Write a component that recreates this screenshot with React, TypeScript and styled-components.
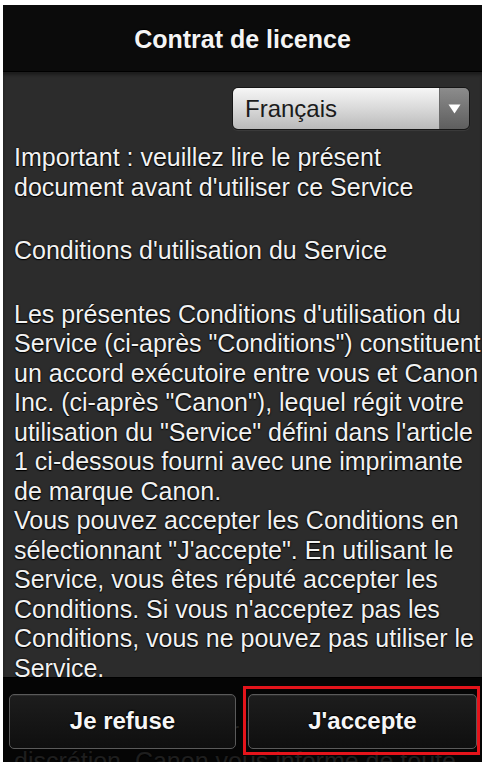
import React from 'react'
import styled, { createGlobalStyle } from 'styled-components'

const GlobalStyle = createGlobalStyle`
  html, body {
    margin: 0;
    padding: 0;
    background: #ffffff;
  }
  * {
    box-sizing: border-box;
  }
`

const paragraphs: string[][] = [
  ['Important : veuillez lire le présent', "document avant d'utiliser ce Service"],
  ["Conditions d'utilisation du Service"],
  [
    "Les présentes Conditions d'utilisation du",
    'Service (ci-après "Conditions") constituent',
    'un accord exécutoire entre vous et Canon',
    'Inc. (ci-après "Canon"), lequel régit votre',
    'utilisation du "Service" défini dans l\'article',
    '1 ci-dessous fourni avec une imprimante',
    'de marque Canon.',
    'Vous pouvez accepter les Conditions en',
    'sélectionnant "J\'accepte". En utilisant le',
    'Service, vous êtes réputé accepter les',
    "Conditions. Si vous n'acceptez pas les",
    'Conditions, vous ne pouvez pas utiliser le',
    'Service.',
  ],
  [
    'Canon peut modifier les Conditions à sa',
    'discrétion. Canon vous informe de toute',
    'modification apportée aux Conditions.',
  ],
]

const Screen = styled.div`
  position: relative;
  margin: 5px 3px 0 3px;
  height: 757px;
  display: flex;
  flex-direction: column;
  overflow: hidden;
  font-family: 'Liberation Sans', Arial, Helvetica, sans-serif;
`

const Header = styled.header`
  height: 67px;
  flex: none;
  display: flex;
  align-items: center;
  justify-content: center;
  background: #0b0b0b;
  border-bottom: 1px solid #000;
`

const Title = styled.h1`
  margin: 2px 0 0 0;
  font-size: 25px;
  font-weight: 700;
  color: #f4f4f4;
  text-shadow: 0 -1px 1px #000;
`

const Body = styled.main`
  flex: 1;
  background: #2c2c2c;
  box-shadow: inset 0 3px 3px rgba(0, 0, 0, 0.35);
  padding: 15px 12px 0 11px;
`

const LangRow = styled.div`
  display: flex;
  justify-content: flex-end;
`

const Select = styled.div`
  width: 238px;
  height: 43px;
  display: flex;
  border-radius: 6px;
  overflow: hidden;
  border: 1px solid #161616;
  box-shadow: 0 1px 1px rgba(255, 255, 255, 0.08);
`

const SelectValue = styled.div`
  flex: 1;
  display: flex;
  align-items: center;
  padding-left: 12px;
  font-size: 24px;
  color: #1b1b1b;
  background: linear-gradient(#f6f6f6 0%, #dcdcdc 45%, #bababa 100%);
`

const SelectArrow = styled.div`
  width: 30px;
  display: flex;
  align-items: center;
  justify-content: center;
  background: linear-gradient(#8c8c8c, #5e5e5e);
  border-left: 1px solid #6a6a6a;
`

const Text = styled.div`
  margin-top: 13px;
  color: #f2f2f2;
  font-size: 25px;
  line-height: 29.5px;
  text-shadow: 0 0 2px #000, 0 1px 1px #000;
`

const Paragraph = styled.p`
  margin: 0 0 34px 0;
`

const Line = styled.span`
  display: block;
  white-space: nowrap;
`

const Footer = styled.footer`
  position: absolute;
  left: 0;
  right: 0;
  bottom: 0;
  height: 85px;
  display: flex;
  align-items: center;
  gap: 7px;
  padding: 0 2px 0 6px;
  background: rgba(0, 0, 0, 0.88);
  border-top: 1px solid rgba(0, 0, 0, 0.9);
`

const Button = styled.button<{ $wide?: boolean }>`
  width: ${(p) => (p.$wide ? '100%' : '227px')};
  height: 55px;
  margin-top: ${(p) => (p.$wide ? '0' : '2px')};
  border: 1px solid #5a5a5a;
  border-radius: 5px;
  background: linear-gradient(#1d1d1d, #0f0f0f);
  box-shadow: inset 0 1px 0 rgba(255, 255, 255, 0.06);
  color: #f6f6f6;
  font-family: 'Liberation Sans', Arial, Helvetica, sans-serif;
  font-size: 24px;
  font-weight: 700;
  text-shadow: 0 -1px 1px #000, 0 0 2px #000;
`

const Highlight = styled.div`
  flex: 1;
  border: 3px solid #e4141b;
  padding: 5px 0 3px 2px;
`

export default function App() {
  return (
    <>
      <GlobalStyle />
      <Screen>
        <Header>
          <Title>Contrat de licence</Title>
        </Header>
        <Body>
          <LangRow>
            <Select>
              <SelectValue>Français</SelectValue>
              <SelectArrow>
                <svg width="13" height="10" viewBox="0 0 13 10">
                  <path d="M0.5 0.5 H12.5 L6.5 9.5 Z" fill="#ffffff" />
                </svg>
              </SelectArrow>
            </Select>
          </LangRow>
          <Text>
            {paragraphs.map((lines, i) => (
              <Paragraph key={i}>
                {lines.map((l) => (
                  <Line key={l}>{l}</Line>
                ))}
              </Paragraph>
            ))}
          </Text>
        </Body>
        <Footer>
          <Button>Je refuse</Button>
          <Highlight>
            <Button $wide>J'accepte</Button>
          </Highlight>
        </Footer>
      </Screen>
    </>
  )
}
